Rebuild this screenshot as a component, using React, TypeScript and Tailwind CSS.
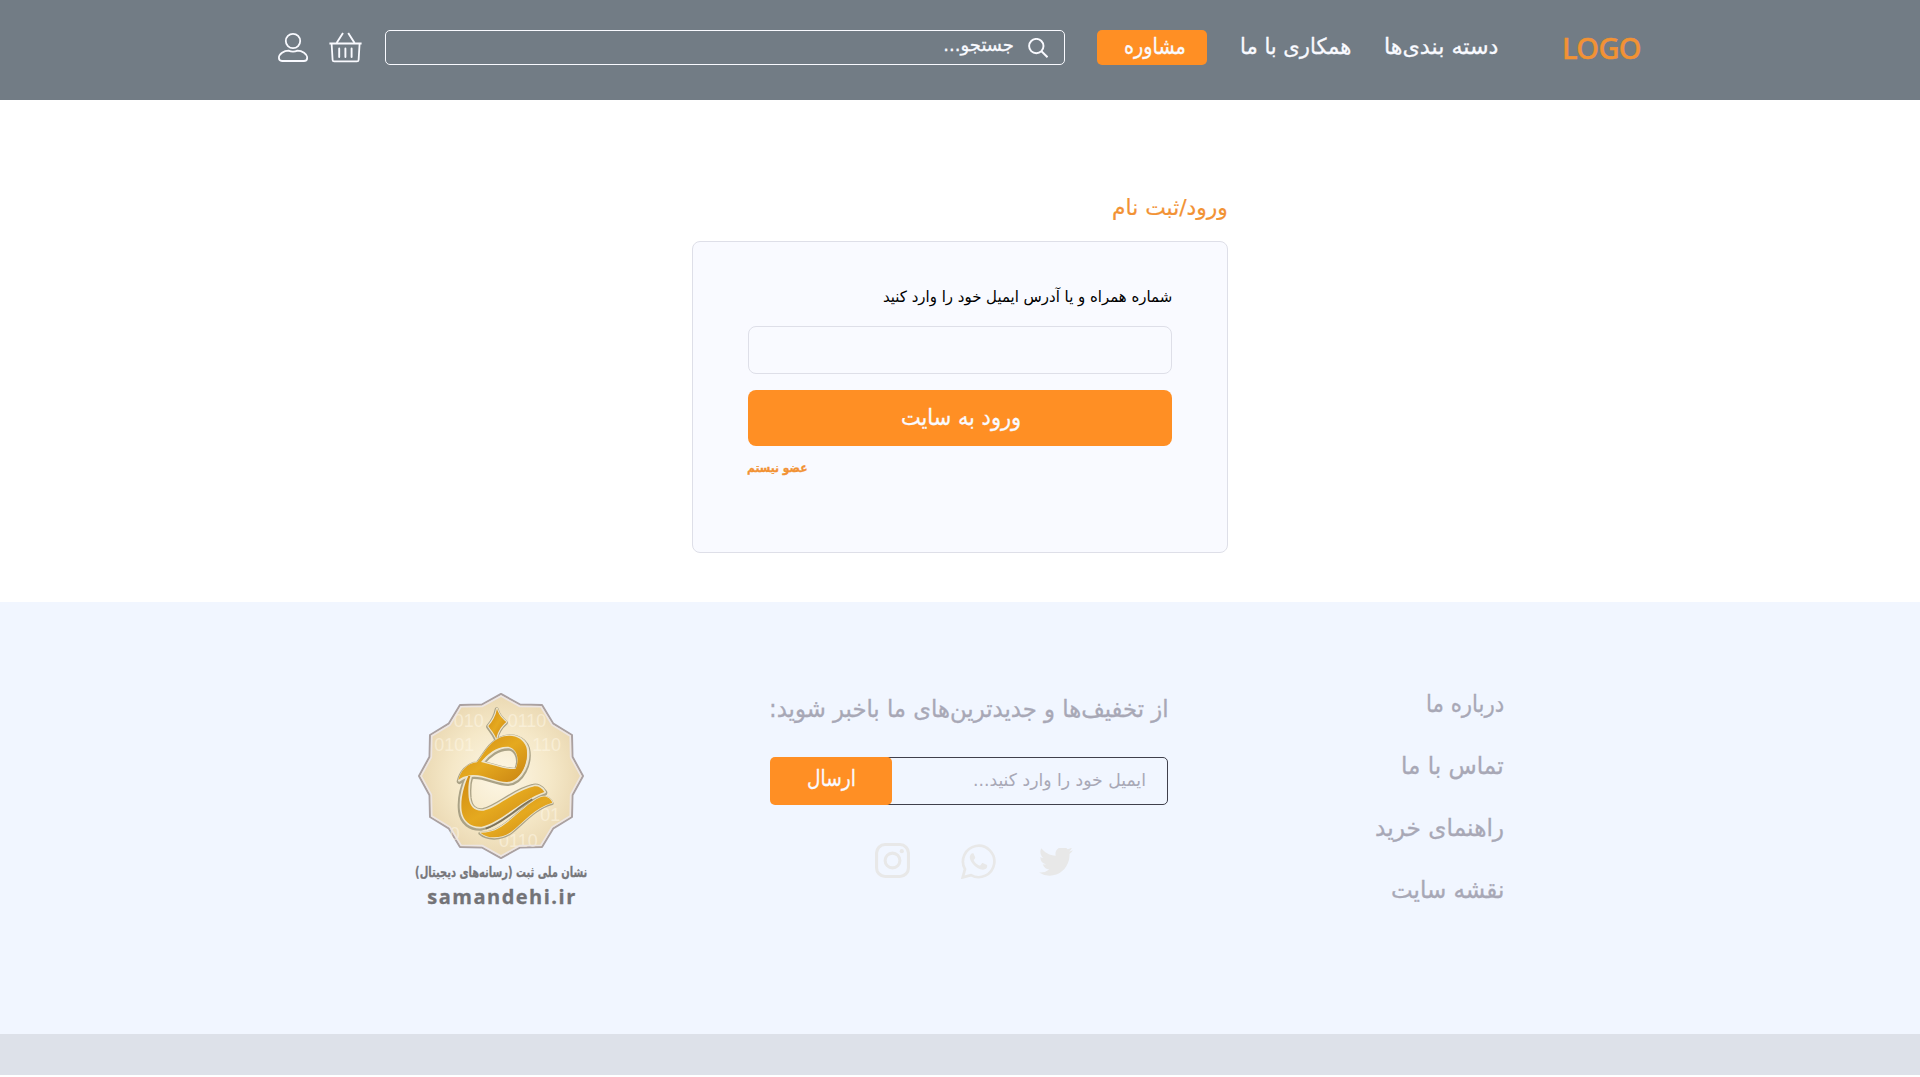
import { useLayoutEffect, useRef, useState } from "react";
import type { ReactNode } from "react";

/** Single line of text stretched horizontally to fill the width of its box. */
function Line({ className, children }: { className: string; children: ReactNode }) {
  const box = useRef<HTMLSpanElement>(null);
  const inner = useRef<HTMLSpanElement>(null);
  const [ratio, setRatio] = useState(1);
  useLayoutEffect(() => {
    if (box.current && inner.current && inner.current.offsetWidth) {
      setRatio(box.current.clientWidth / inner.current.offsetWidth);
    }
  }, []);
  return (
    <span ref={box} className={`block shrink-0 whitespace-nowrap ${className}`}>
      <span
        ref={inner}
        className="inline-block origin-right align-top"
        style={{ transform: `scaleX(${ratio})` }}
      >
        {children}
      </span>
    </span>
  );
}

function UserIcon() {
  return (
    <svg className="block h-[31px] w-[30px] shrink-0" viewBox="0 0 30 31" fill="none" stroke="#f9faff" strokeWidth="1.8">
      <circle cx="15" cy="9" r="7.2" />
      <path d="M10.5 18.6 Q15 20.6 19.5 18.6 C24 18.6 29.2 22 29.2 25.8 Q29.2 29 26 29 H4 Q.9 29 .9 25.8 C.9 22 6 18.6 10.5 18.6Z" />
    </svg>
  );
}

function BasketIcon() {
  return (
    <svg className="block h-[33px] w-[33px] shrink-0" viewBox="0 0 33 33" fill="none" stroke="#f9faff">
      <path d="M.4 13.5H32.6" strokeWidth="2" />
      <path d="M2.6 13.5L3.6 30Q3.7 31.4 5.2 31.4H28Q29.5 31.4 29.6 30L30.6 13.5" strokeWidth="1.8" />
      <path d="M7.6 13L14 3M25.6 13L19.2 3" strokeWidth="1.9" />
      <path d="M10.2 18.5V27M16.4 18.5V27M22.6 18.5V27" strokeWidth="1.9" strokeLinecap="round" />
    </svg>
  );
}

function SearchIcon() {
  return (
    <svg className="mt-[7px] block h-[20px] w-[20px] shrink-0" viewBox="0 0 20 20" fill="none" stroke="#f9faff" strokeWidth="1.9">
      <circle cx="8.3" cy="8.1" r="7.2" />
      <path d="M13.5 13.3L19.5 19.2" />
    </svg>
  );
}

function TwitterIcon() {
  return (
    <svg className="mt-[5px] block h-[28px] w-[34px]" viewBox="0 3 24 19" preserveAspectRatio="none" fill="#e8e8e8">
      <path d="M23.953 4.57a10 10 0 01-2.825.775 4.958 4.958 0 002.163-2.723c-.951.555-2.005.959-3.127 1.184a4.92 4.92 0 00-8.384 4.482C7.69 8.095 4.067 6.13 1.64 3.162a4.822 4.822 0 00-.666 2.475c0 1.71.87 3.213 2.188 4.096a4.904 4.904 0 01-2.228-.616v.06a4.923 4.923 0 003.946 4.827 4.996 4.996 0 01-2.212.085 4.936 4.936 0 004.604 3.417 9.867 9.867 0 01-6.102 2.105c-.39 0-.779-.023-1.17-.067a13.995 13.995 0 007.557 2.209c9.053 0 13.998-7.496 13.998-13.985 0-.21 0-.42-.015-.63A9.935 9.935 0 0024 4.59z" />
    </svg>
  );
}

function WhatsappIcon() {
  return (
    <svg className="mt-px block h-[35px] w-[35px]" viewBox="0 0 35 35" fill="none">
      <path d="M1.7 33.4L4 25.2A15.7 15.7 0 1 1 9.9 31.1Z" stroke="#e8e8e8" strokeWidth="2.7" />
      <path d="M12.4 9.3C11.7 9 10.9 9.1 10.3 9.7C9.2 10.9 8.6 12.3 8.8 13.9C9.6 18.7 15.4 24.6 20.5 25.6C22.9 26 25.6 24.9 26.1 22.9C26.4 21.6 26.3 21.2 25.6 20.8L22.2 19.2C21.6 19 21.2 19.1 20.8 19.6L19.5 21.3C19.1 21.7 18.7 21.7 18.1 21.4C15.9 20.4 14.1 18.8 12.9 16.8C12.6 16.3 12.7 15.9 13.1 15.5L14 14.3C14.3 13.9 14.3 13.5 14.1 13.1Z" fill="#e8e8e8" />
    </svg>
  );
}

function InstagramIcon() {
  return (
    <svg className="block h-[35px] w-[35px]" viewBox="0 0 35 35" fill="none" stroke="#e8e8e8" strokeWidth="3.1">
      <rect x="1.55" y="1.55" width="31.9" height="31.9" rx="8.5" />
      <circle cx="17.5" cy="17.5" r="7.4" />
      <circle cx="26.8" cy="8.2" r="2.1" fill="#e8e8e8" stroke="none" />
    </svg>
  );
}

const STAR_POINTS = Array.from({ length: 24 }, (_, i) => {
  const angle = (i * Math.PI) / 12;
  const r = i % 2 ? 222 : 246;
  return `${(302 + r * Math.sin(angle)).toFixed(1)},${(288 - r * Math.cos(angle)).toFixed(1)}`;
}).join(" ");

const BOWL =
  "M204 288C190 318 180 358 184 392C188 424 212 442 244 440C300 428 368 356 432 336C424 322 410 316 398 320C344 332 290 384 250 392C224 396 208 380 205 352C203 328 204 306 210 288Z";
const TAIL = "M240 458C262 478 304 476 332 456C370 426 404 382 456 368C450 352 434 346 420 352C378 370 336 422 296 444C280 454 262 458 240 458Z";
const LOOP =
  "M174 300C180 276 198 250 230 247C252 220 264 190 296 174C330 158 368 170 378 202C388 244 362 304 320 306C286 306 244 280 210 286C194 288 184 292 174 300ZM242 246C280 254 320 272 346 266C358 240 352 206 324 200C290 198 260 222 242 246Z";
const DOT = "M290 86C294 102 306 116 318 126C304 138 292 154 288 176C282 160 270 148 264 138C276 124 286 108 290 86Z";

function Samandehi() {
  return (
    <div className="flex w-[174px] shrink-0 flex-col items-center">
      <svg className="block h-[168px] w-[168px]" viewBox="50 36 504 504">
        <defs>
          <radialGradient id="paper">
            <stop offset="0" stopColor="#fdf7e6" />
            <stop offset=".6" stopColor="#f5e8c8" />
            <stop offset="1" stopColor="#ead8b2" />
          </radialGradient>
          <linearGradient id="gold" x1="0" y1="0" x2="1" y2="1">
            <stop offset="0" stopColor="#cf8a12" />
            <stop offset=".5" stopColor="#e5a91f" />
            <stop offset="1" stopColor="#c98413" />
          </linearGradient>
        </defs>
        <polygon points={STAR_POINTS} fill="url(#paper)" stroke="#aaa1a2" strokeWidth="6" strokeLinejoin="round" />
        <g direction="ltr" fill="#fff9ea" fillOpacity=".5" fontFamily="Liberation Sans, sans-serif" fontSize="54">
          <text x="160" y="140">010</text>
          <text x="322" y="140">0110</text>
          <text x="102" y="212">0101</text>
          <text x="396" y="212">110</text>
          <text x="420" y="422">01</text>
          <text x="148" y="480">0</text>
          <text x="296" y="500">0110</text>
        </g>
        <polygon points={STAR_POINTS} fill="none" stroke="#ece5e3" strokeWidth="5" transform="translate(302 288) scale(.975) translate(-302 -288)" />
        <g fillRule="evenodd" strokeLinejoin="round">
          <g fill="#aaa286" stroke="#aaa286" strokeWidth="20" transform="translate(-1 2)">
            <path d={DOT} strokeWidth="12" />
            <path d={LOOP} strokeWidth="16" transform="translate(4 2)" />
            <path d={BOWL} />
            <path d={TAIL} strokeWidth="10" />
          </g>
          <g fill="none" stroke="#ede5cd" strokeWidth="10">
            <path d={DOT} strokeWidth="6" />
            <path d={LOOP} strokeWidth="8" transform="translate(3 1)" />
            <path d={BOWL} />
            <path d={TAIL} strokeWidth="5" />
          </g>
          <g fill="url(#gold)">
            <path d={DOT} />
            <path d={LOOP} />
            <path d={BOWL} />
            <path d={TAIL} />
          </g>
          <path d="M256 446C306 430 346 386 396 358" fill="none" stroke="#7d7258" strokeWidth="5" />
        </g>
      </svg>
      <Line className="mt-[2px] h-[20px] w-[172px] text-[14px] leading-[20px] font-bold text-[#77777b]">
        نشان ملی ثبت (رسانه‌های دیجیتال)
      </Line>
      <span dir="ltr" className="mt-[2px] block pl-[2px] font-['Open_Sans',sans-serif] text-[20px] leading-[26px] font-bold tracking-[1.5px] text-[#737377]">
        samandehi.ir
      </span>
    </div>
  );
}

export default function App() {
  return (
    <div dir="rtl" className="flex h-[1077px] w-[1920px] flex-col overflow-hidden bg-white font-['DejaVu_Sans',sans-serif] [-webkit-text-stroke:0.3px]">
      <header className="flex h-[100px] shrink-0 items-start bg-[#727c85] pt-[30px] pr-[279px] text-[#f9faff]">
        <span className="block w-[78px] shrink-0 text-left font-['Noto_Sans',sans-serif] text-[29px] leading-[35px] font-medium tracking-[-0.6px] text-[#f29234] [-webkit-text-stroke:0.4px]">
          LOGO
        </span>
        <nav className="mr-[65px] flex gap-[32px] text-[22px] leading-[34px]">
          <Line className="w-[115px]">دسته بندی‌ها</Line>
          <Line className="w-[111px]">همکاری با ما</Line>
        </nav>
        <button className="mr-[33px] flex h-[35px] w-[110px] shrink-0 justify-center rounded-[5px] bg-[#ff8f24]">
          <Line className="mr-[-5px] w-[62px] text-[22px] leading-[34px]">مشاوره</Line>
        </button>
        <div className="mr-[32px] flex h-[35px] w-[680px] shrink-0 items-start rounded-[5px] border border-[#f9faff] pr-[16px]">
          <SearchIcon />
          <Line className="mr-[14px] w-[71px] text-[18px] leading-[28px]">جستجو...</Line>
        </div>
        <div className="mr-[23px] flex gap-[21px]">
          <BasketIcon />
          <div className="pt-[2px]">
            <UserIcon />
          </div>
        </div>
      </header>

      <main className="flex h-[502px] shrink-0 flex-col items-center">
        <div className="mt-[91px] w-[536px]">
          <h1 className="h-[50px] text-[22px] leading-[34px] text-[#f29234] [-webkit-text-stroke:0.2px]">
            <Line className="w-[116px]">ورود/ثبت نام</Line>
          </h1>
          <section className="flex h-[312px] flex-col rounded-[8px] border border-[#dedfe8] bg-[#f9faff] px-[55px] pt-[45px]">
            <label className="block h-[39px] text-[15.5px] leading-[21px] text-black [-webkit-text-stroke:0px]">
              <Line className="w-[289px]">شماره همراه و یا آدرس ایمیل خود را وارد کنید</Line>
            </label>
            <input className="h-[48px] w-full rounded-[8px] border border-[#dedfe8] bg-transparent outline-none" />
            <button className="mt-[16px] flex h-[56px] justify-center rounded-[8px] bg-[#ff8f24] pl-[2px] text-[23px] leading-[54px] text-[#f9faff]">
              <Line className="w-[120px]">ورود به سایت</Line>
            </button>
            <a className="mt-[13px] -ml-px self-end text-[12.5px] leading-[18px] font-bold text-[#f29234]">
              <Line className="w-[60px]">عضو نیستم</Line>
            </a>
          </section>
        </div>
      </main>

      <footer className="flex h-[432px] shrink-0 items-start bg-[#f1f6ff] pr-[416px] text-[#a8a8b6]">
        <ul className="mt-[86px] flex w-[128px] shrink-0 flex-col text-[24px] leading-[33px]">
          <li className="h-[62px]"><Line className="w-[78px]">درباره ما</Line></li>
          <li className="h-[62px]"><Line className="w-[103px]">تماس با ما</Line></li>
          <li className="h-[62px]"><Line className="w-[129px]">راهنمای خرید</Line></li>
          <li className="h-[62px]"><Line className="w-[113px]">نقشه سایت</Line></li>
        </ul>
        <div className="mr-[208px] flex w-[398px] shrink-0 flex-col pt-[91px]">
          <Line className="-mr-px h-[64px] w-[400px] text-[24px] leading-[33px]">از تخفیف‌ها و جدیدترین‌های ما باخبر شوید:</Line>
          <div className="flex h-[48px]">
            <div className="flex w-[281px] rounded-r-[5px] border border-[#40404c] pr-[21px]">
              <Line className="w-[173px] text-[17.5px] leading-[44px] [-webkit-text-stroke:0px]">ایمیل خود را وارد کنید...</Line>
            </div>
            <button className="-mr-[5px] flex w-[122px] justify-center rounded-[5px] bg-[#ff8f24] text-[#f9faff]">
              <Line className="w-[49px] text-[22px] leading-[44px]">ارسال</Line>
            </button>
          </div>
          <div className="mt-[38px] flex gap-[43px] pr-[95px]">
            <TwitterIcon />
            <WhatsappIcon />
            <div className="mr-[8px]">
              <InstagramIcon />
            </div>
          </div>
        </div>
        <div className="mr-[182px] pt-[90px]">
          <Samandehi />
        </div>
      </footer>
      <div className="h-[41px] shrink-0 bg-[#dde1e9]" />
    </div>
  );
}
